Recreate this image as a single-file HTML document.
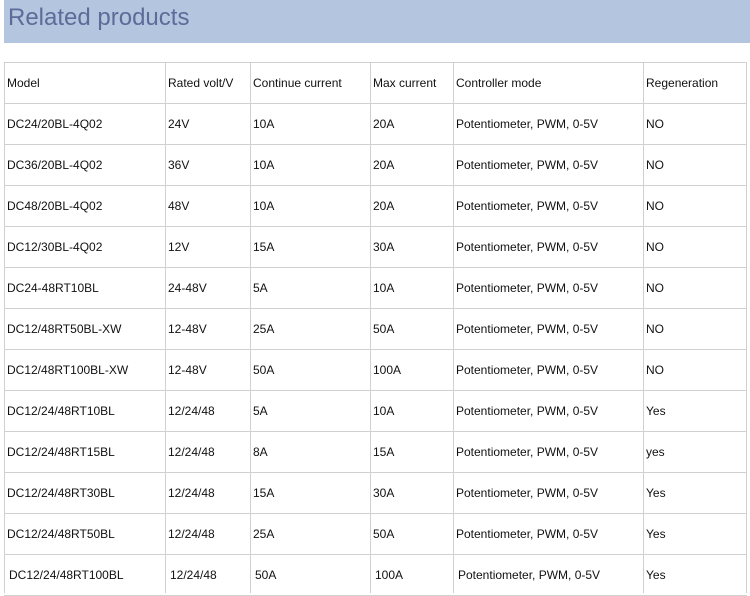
<!DOCTYPE html>
<html><head><meta charset="utf-8"><style>
body{margin:0;width:750px;height:593px;overflow:hidden;background:#fff;font-family:"Liberation Sans",Arial,sans-serif;position:relative}
.hd{position:absolute;left:4px;top:0;width:746px;height:43px;background:#b4c6df}
.hd span{position:absolute;left:4px;top:4px;font-size:24px;color:#5d6b99}
.h{position:absolute;background:#d0d0d0;height:1px}
.v{position:absolute;background:#d0d0d0;width:1px;top:62px;height:531px}
.t{position:absolute;font-size:12px;color:#111;line-height:14px;white-space:nowrap}
</style></head><body>
<div class="hd"><span>Related products</span></div>
<div id="g"></div>
<script>
var cols=[4,165,250,370,453,643,746];
var rows=[["Model","Rated volt/V","Continue current","Max current","Controller mode","Regeneration"],
["DC24/20BL-4Q02","24V","10A","20A","Potentiometer, PWM, 0-5V","NO"],
["DC36/20BL-4Q02","36V","10A","20A","Potentiometer, PWM, 0-5V","NO"],
["DC48/20BL-4Q02","48V","10A","20A","Potentiometer, PWM, 0-5V","NO"],
["DC12/30BL-4Q02","12V","15A","30A","Potentiometer, PWM, 0-5V","NO"],
["DC24-48RT10BL","24-48V","5A","10A","Potentiometer, PWM, 0-5V","NO"],
["DC12/48RT50BL-XW","12-48V","25A","50A","Potentiometer, PWM, 0-5V","NO"],
["DC12/48RT100BL-XW","12-48V","50A","100A","Potentiometer, PWM, 0-5V","NO"],
["DC12/24/48RT10BL","12/24/48","5A","10A","Potentiometer, PWM, 0-5V","Yes"],
["DC12/24/48RT15BL","12/24/48","8A","15A","Potentiometer, PWM, 0-5V","yes"],
["DC12/24/48RT30BL","12/24/48","15A","30A","Potentiometer, PWM, 0-5V","Yes"],
["DC12/24/48RT50BL","12/24/48","25A","50A","Potentiometer, PWM, 0-5V","Yes"],
["DC12/24/48RT100BL","12/24/48","50A","100A","Potentiometer, PWM, 0-5V","Yes"]];
var h="";
for(var i=0;i<cols.length;i++)h+='<div class="v" style="left:'+cols[i]+'px"></div>';
for(var r=0;r<=13;r++)h+='<div class="h" style="top:'+(62+41*r)+'px;left:4px;width:743px"></div>';
for(var r=0;r<rows.length;r++)for(var c=0;c<6;c++){
var off=(r==12?(c==5?3:5):3);
h+='<div class="t" style="left:'+(cols[c]+off)+'px;top:'+(62+41*r+14)+'px">'+rows[r][c]+'</div>';}
document.getElementById('g').innerHTML=h;
</script>
</body></html>
